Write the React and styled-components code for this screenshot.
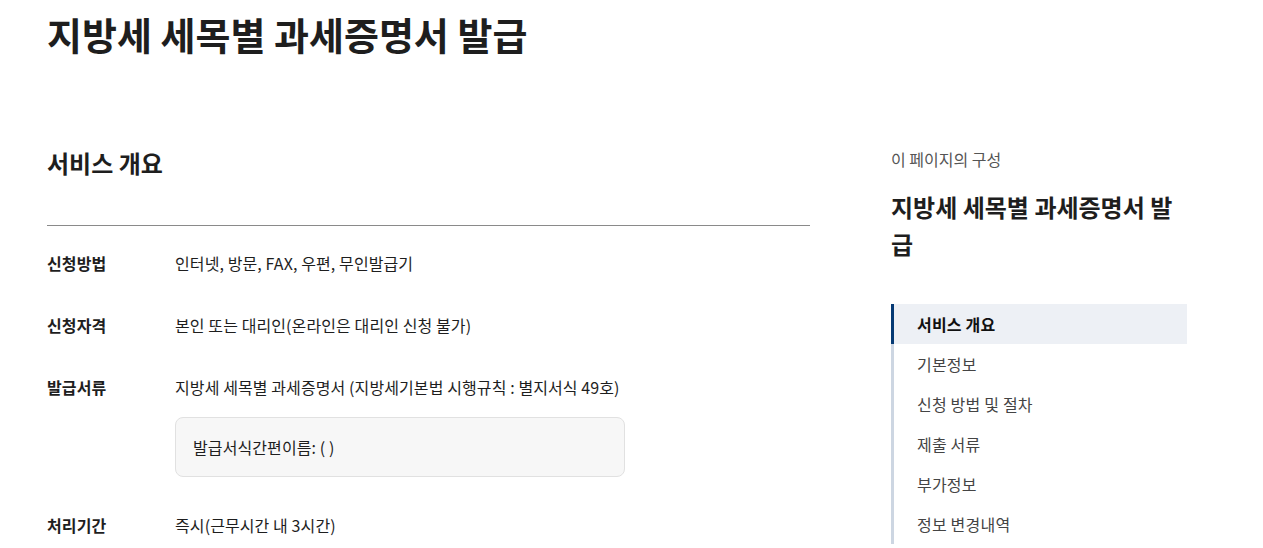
import React from "react";
import styled, { createGlobalStyle } from "styled-components";

const GlobalStyle = createGlobalStyle`
  body {
    margin: 0;
    background: #fff;
    font-family: "Noto Sans CJK KR", "Noto Sans", sans-serif;
    color: #1e1e1e;
  }
`

const Page = styled.div`
  padding: 2px 0 0 47px;
  width: 1140px;
`
const PageTitle = styled.h1`
  margin: 0;
  font-size: 38px;
  line-height: 64px;
  font-weight: 700;
`
const Body = styled.div`
  display: flex;
  gap: 81px;
  margin-top: 74px;
`
const Main = styled.div`
  width: 763px;
`
const SectionTitle = styled.h2`
  margin: 0;
  font-size: 24px;
  line-height: 36px;
  font-weight: 700;
  padding: 5px 0 44px;
  border-bottom: 1px solid #8a8a8a;
`
const InfoList = styled.dl`
  margin: 0;
  padding-top: 24px;
`
const InfoRow = styled.div`
  display: grid;
  grid-template-columns: 128px 1fr;
  margin-bottom: 36px;
  font-size: 16px;
  line-height: 26px;
  letter-spacing: 0.1px;
`
const Label = styled.dt`
  font-weight: 700;
`
const Value = styled.dd`
  margin: 0;
`
const NoteBox = styled.div`
  margin-top: 17px;
  width: 450px;
  box-sizing: border-box;
  height: 60px;
  padding: 0 17px;
  display: flex;
  align-items: center;
  background: #f7f7f7;
  border: 1px solid #e1e1e1;
  border-radius: 8px;
  margin-bottom: -1px;
`
const Aside = styled.aside`
  width: 296px;
`
const AsideCaption = styled.div`
  font-size: 16px;
  line-height: 24px;
  color: #555;
  margin-top: 7px;
`
const AsideTitle = styled.div`
  margin-top: 17px;
  font-size: 24px;
  line-height: 37px;
  font-weight: 700;
`
const Nav = styled.ul`
  list-style: none;
  margin: 42px 0 0;
  padding: 0;
  border-left: 3px solid #cdd6e2;
`
const NavItem = styled.li`
  height: 40px;
  display: flex;
  align-items: center;
  padding-left: 23px;
  margin-left: -3px;
  font-size: 16px;
  letter-spacing: 0.2px;
  color: ${p => (p.active ? "#111" : "#444")};
  font-weight: ${p => (p.active ? 700 : 400)};
  background: ${p => (p.active ? "#edf0f5" : "transparent")};
  border-left: 3px solid ${p => (p.active ? "#063a74" : "transparent")};
`

const rows = [
  ["신청방법", "인터넷, 방문, FAX, 우편, 무인발급기"],
  ["신청자격", "본인 또는 대리인(온라인은 대리인 신청 불가)"],
  ["발급서류", "지방세 세목별 과세증명서 (지방세기본법 시행규칙 : 별지서식 49호)", "발급서식간편이름: ( )"],
  ["처리기간", "즉시(근무시간 내 3시간)"],
]

const navItems = ["서비스 개요", "기본정보", "신청 방법 및 절차", "제출 서류", "부가정보", "정보 변경내역"]

export default function App() {
  return (
    <>
      <GlobalStyle />
      <Page>
        <PageTitle>지방세 세목별 과세증명서 발급</PageTitle>
        <Body>
          <Main>
            <SectionTitle>서비스 개요</SectionTitle>
            <InfoList>
              {rows.map(([label, value, note]) => (
                <InfoRow key={label}>
                  <Label>{label}</Label>
                  <Value>
                    {value}
                    {note && <NoteBox>{note}</NoteBox>}
                  </Value>
                </InfoRow>
              ))}
            </InfoList>
          </Main>
          <Aside>
            <AsideCaption>이 페이지의 구성</AsideCaption>
            <AsideTitle>지방세 세목별 과세증명서 발급</AsideTitle>
            <Nav>
              {navItems.map((item, i) => (
                <NavItem key={item} active={i === 0}>{item}</NavItem>
              ))}
            </Nav>
          </Aside>
        </Body>
      </Page>
    </>
  )
}
